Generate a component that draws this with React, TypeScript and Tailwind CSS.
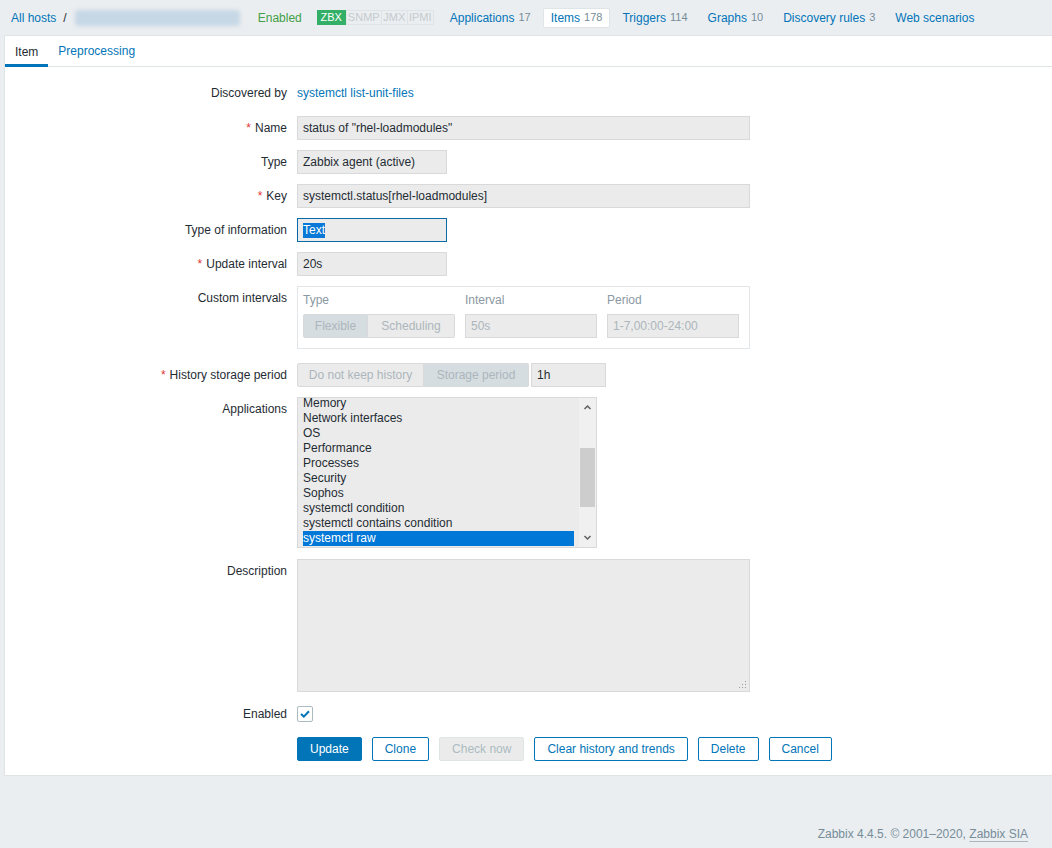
import type { ReactNode } from "react";

const apps = [
  "Memory",
  "Network interfaces",
  "OS",
  "Performance",
  "Processes",
  "Security",
  "Sophos",
  "systemctl condition",
  "systemctl contains condition",
  "systemctl raw",
];

function NavItem({ label, count, active }: { label: string; count?: string; active?: boolean }) {
  return (
    <div
      className={
        "flex h-[20px] items-center px-[7px] " +
        (active ? "border border-[#dfe4e7] bg-white rounded-[2px]" : "border border-transparent")
      }
    >
      <span className="text-[#0275b8]">{label}</span>
      {count && <span className="ml-[4px] text-[11px] text-[#768d99]">{count}</span>}
    </div>
  );
}

function Label({ children, required }: { children: ReactNode; required?: boolean }) {
  return (
    <div className="flex h-6 items-center justify-end whitespace-nowrap">
      {required && <span className="mr-[4px] text-[#e33734]">*</span>}
      {children}
    </div>
  );
}

function Row({ label, required, children, className = "" }: { label: string; required?: boolean; children: ReactNode; className?: string }) {
  return (
    <div className={"grid grid-cols-[282px_1fr] gap-x-[10px] " + className}>
      <Label required={required}>{label}</Label>
      <div>{children}</div>
    </div>
  );
}

function Field({ value, width, focused }: { value: string; width: string; focused?: boolean }) {
  return (
    <div
      className={
        "flex h-6 items-center border bg-[#ebebeb] pl-[5px] " +
        width +
        (focused ? " border-[#0a6aa8]" : " border-[#d7d9da]")
      }
    >
      {focused ? <span className="bg-[#0a78d6] leading-[15px] text-white">{value}</span> : value}
    </div>
  );
}

function Btn({ children, primary, disabled }: { children: ReactNode; primary?: boolean; disabled?: boolean }) {
  const tone = primary
    ? "bg-[#0275b8] border-[#0275b8] text-white"
    : disabled
      ? "bg-[#ebebeb] border-[#dfe4e7] text-[#acbbc2]"
      : "bg-white border-[#0275b8] text-[#0275b8]";
  return <div className={"flex h-6 items-center rounded-[2px] border px-[12px] " + tone}>{children}</div>;
}

export default function App() {
  return (
    <div
      className="min-h-[848px] bg-[#ebeef1] text-[12px] text-[#1f2c33]"
      style={{ fontFamily: '"Liberation Sans", Arial, sans-serif' }}
    >
      {/* host navigation */}
      <div className="flex h-[35px] items-center pl-[11px]">
        <span className="text-[#0275b8]">All hosts</span>
        <span className="ml-[7px] text-[#1f2c33]">/</span>
        <div className="ml-[8px] h-[16px] w-[165px] rounded-[3px] bg-[#c6d7e5] blur-[2px]" />
        <span className="ml-[18px] text-[#429e47]">Enabled</span>
        <div className="ml-[15px] flex h-[15px] text-[11px] leading-[13px]">
          <span className="w-[29px] border border-[#34af67] bg-[#34af67] text-center text-white">ZBX</span>
          <span className="w-[36px] border border-[#dfe4e7] text-center text-[#c5cace]">SNMP</span>
          <span className="w-[26px] border border-l-0 border-[#dfe4e7] text-center text-[#c5cace]">JMX</span>
          <span className="w-[26px] border border-l-0 border-[#dfe4e7] text-center text-[#c5cace]">IPMI</span>
        </div>
        <div className="ml-[8px] flex gap-[4px]">
          <NavItem label="Applications" count="17" />
          <NavItem label="Items" count="178" active />
          <NavItem label="Triggers" count="114" />
          <NavItem label="Graphs" count="10" />
          <NavItem label="Discovery rules" count="3" />
          <NavItem label="Web scenarios" />
        </div>
      </div>

      {/* form panel */}
      <div className="ml-[4px] border-y border-l border-[#dfe4e7] bg-white">
        <div className="flex h-[31px] border-b border-[#dfe4e7]">
          <div className="-mb-px flex items-center border-b-[3px] border-[#0275b8] px-[10px] pt-[3px]">Item</div>
          <div className="flex items-center px-[10px] text-[#0275b8]">Preprocessing</div>
        </div>

        <div className="flex flex-col pb-[14px] pt-[14px]">
          <Row label="Discovered by">
            <div className="flex h-6 items-center text-[#0275b8]">systemctl list-unit-files</div>
          </Row>
          <Row label="Name" required className="mt-[11px]">
            <Field value={'status of "rhel-loadmodules"'} width="w-[453px]" />
          </Row>
          <Row label="Type" className="mt-[10px]">
            <Field value="Zabbix agent (active)" width="w-[150px]" />
          </Row>
          <Row label="Key" required className="mt-[10px]">
            <Field value="systemctl.status[rhel-loadmodules]" width="w-[453px]" />
          </Row>
          <Row label="Type of information" className="mt-[10px]">
            <Field value="Text" width="w-[150px]" focused />
          </Row>
          <Row label="Update interval" required className="mt-[10px]">
            <Field value="20s" width="w-[150px]" />
          </Row>
          <Row label="Custom intervals" className="mt-[10px]">
            <div className="w-[453px] border border-[#e3e6e8] px-[5px] pb-[10px] pt-[4px]">
              <div className="flex h-[18px] items-center gap-[10px] text-[#8a99a3]">
                <span className="w-[152px]">Type</span>
                <span className="w-[132px]">Interval</span>
                <span>Period</span>
              </div>
              <div className="mt-[5px] flex gap-[10px] text-[#acb6bc]">
                <div className="flex h-6 w-[152px]">
                  <div className="flex w-[65px] items-center justify-center rounded-l-[2px] border border-[#d7d9da] bg-[#d6dde1]">Flexible</div>
                  <div className="flex flex-1 items-center justify-center rounded-r-[2px] border border-l-0 border-[#d7d9da] bg-[#ebebeb]">Scheduling</div>
                </div>
                <div className="flex h-6 w-[132px] items-center border border-[#d7d9da] bg-[#ebebeb] pl-[5px]">50s</div>
                <div className="flex h-6 w-[132px] items-center border border-[#d7d9da] bg-[#ebebeb] pl-[5px]">1-7,00:00-24:00</div>
              </div>
            </div>
          </Row>
          <Row label="History storage period" required className="mt-[14px]">
            <div className="flex h-6">
              <div className="flex w-[127px] items-center justify-center rounded-l-[2px] border border-[#d7d9da] bg-[#ebebeb] text-[#acb6bc]">Do not keep history</div>
              <div className="flex w-[105px] items-center justify-center rounded-r-[2px] border border-l-0 border-[#d7d9da] bg-[#d6dde1] text-[#acb6bc]">Storage period</div>
              <div className="ml-[2px] flex w-[75px] items-center border border-[#d7d9da] bg-[#ebebeb] pl-[5px]">1h</div>
            </div>
          </Row>
          <Row label="Applications" className="mt-[10px]">
            <div className="flex h-[151px] w-[300px] border border-[#d7d9da] bg-[#ebebeb]">
              <div className="flex-1 overflow-hidden px-[5px]">
                <div className="-mt-[2px]">
                  {apps.map((a) => (
                    <div
                      key={a}
                      className={"h-[15px] leading-[15px] " + (a === "systemctl raw" ? "bg-[#0078d7] text-white" : "")}
                    >
                      {a}
                    </div>
                  ))}
                </div>
              </div>
              <div className="flex w-[17px] flex-col items-center bg-[#f0f0f0]">
                <svg width="9" height="17" viewBox="0 0 9 17" className="shrink-0">
                  <path d="M1.5 11 L4.5 8 L7.5 11" fill="none" stroke="#606060" strokeWidth="1.5" />
                </svg>
                <div className="mt-[33px] h-[59px] w-[15px] bg-[#cdcdcd]" />
                <div className="flex-1" />
                <svg width="9" height="17" viewBox="0 0 9 17" className="shrink-0">
                  <path d="M1.5 6 L4.5 9 L7.5 6" fill="none" stroke="#606060" strokeWidth="1.5" />
                </svg>
              </div>
            </div>
          </Row>
          <Row label="Description" className="mt-[11px]">
            <div className="flex h-[133px] w-[453px] items-end justify-end border border-[#d7d9da] bg-[#ebebeb] p-[2px]">
              <svg width="8" height="8" viewBox="0 0 8 8">
                <g fill="#9a9a9a">
                  <rect x="6" y="0" width="1" height="1" />
                  <rect x="3" y="3" width="1" height="1" />
                  <rect x="6" y="3" width="1" height="1" />
                  <rect x="0" y="6" width="1" height="1" />
                  <rect x="3" y="6" width="1" height="1" />
                  <rect x="6" y="6" width="1" height="1" />
                </g>
              </svg>
            </div>
          </Row>
          <Row label="Enabled" className="mt-[10px]">
            <div className="flex h-6 items-center">
              <div className="flex h-[16px] w-[16px] items-center justify-center rounded-[2px] border border-[#acbbc2] bg-white">
                <svg width="10" height="8" viewBox="0 0 10 8">
                  <path d="M1 4 L3.8 6.6 L9 1.2" fill="none" stroke="#0275b8" strokeWidth="2" />
                </svg>
              </div>
            </div>
          </Row>
          <div className="mt-[11px] flex gap-[10px] pl-[292px]">
            <Btn primary>Update</Btn>
            <Btn>Clone</Btn>
            <Btn disabled>Check now</Btn>
            <Btn>Clear history and trends</Btn>
            <Btn>Delete</Btn>
            <Btn>Cancel</Btn>
          </div>
        </div>
      </div>

      {/* footer */}
      <div className="mt-[49px] flex justify-end pr-[24px] text-[#768d99]">
        <span>Zabbix 4.4.5. © 2001–2020,&nbsp;</span>
        <span className="underline decoration-[#a9b7bf] underline-offset-[3px]">Zabbix SIA</span>
      </div>
    </div>
  );
}
